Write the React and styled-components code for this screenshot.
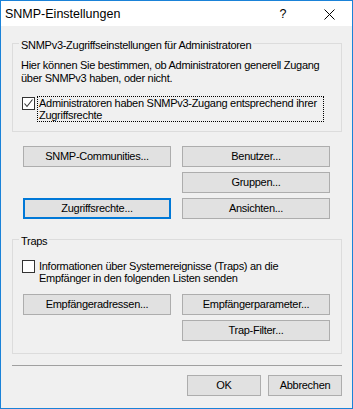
import React from "react";
import styled, { createGlobalStyle, css } from "styled-components";

const GlobalStyle = createGlobalStyle`
  html, body {
    margin: 0;
    padding: 0;
    background: #ffffff;
  }
  * {
    box-sizing: border-box;
  }
`;

const Window = styled.div`
  width: 353px;
  height: 409px;
  display: flex;
  flex-direction: column;
  border: 1px solid #1a82d8;
  background: #f0f0f0;
  font-family: "Liberation Sans", Arial, sans-serif;
  font-size: 11px;
  line-height: 13px;
  letter-spacing: -0.28px;
  color: #000;
`;

const TitleBar = styled.div`
  height: 25px;
  display: flex;
  align-items: center;
  background: #ffffff;
`;

const Title = styled.div`
  flex: 1;
  padding-left: 4px;
  font-size: 12.5px;
  line-height: 16px;
  letter-spacing: 0;
  padding-top: 1px;
`;

const TitleButton = styled.div`
  width: 46px;
  height: 25px;
  display: flex;
  align-items: center;
  justify-content: center;
  font-size: 12.5px;
  letter-spacing: 0;
  padding-top: 1px;
`;

const Body = styled.div`
  flex: 1;
  display: flex;
  flex-direction: column;
  padding: 9px 10px 0 11px;
`;

const Group = styled.fieldset`
  margin: 0;
  min-width: 0;
  border: 1px solid #dcdcdc;
  padding: 7px 8px ${(p) => p.$bottom}px 8px;
  ${(p) =>
    p.$top &&
    css`
      margin-top: ${p.$top}px;
    `}
`;

const Legend = styled.legend`
  padding: 4px 2px 0;
  margin-left: -2px;
  line-height: 13px;
`;

const Text = styled.div`
  margin: 0;
  white-space: nowrap;
`;

const CheckRow = styled.div`
  display: flex;
  align-items: flex-start;
  margin-top: ${(p) => p.$top}px;
`;

const Box = styled.div`
  width: 13px;
  height: 13px;
  flex: none;
  margin: 1px 2px 0 1px;
  border: 1px solid #333333;
  background: #ffffff;
  display: flex;
  align-items: center;
  justify-content: center;
`;

const CheckLabel = styled.div`
  width: 287px;
  line-height: 12px;
  padding: 0 1px;
  border: 1px dotted ${(p) => (p.$focus ? "#000000" : "transparent")};
`;

const ButtonGrid = styled.div`
  display: grid;
  grid-template-columns: 148px 148px;
  column-gap: 11px;
  row-gap: 5px;
  margin: ${(p) => p.$top}px 0 0 ${(p) => p.$left}px;
`;

const Button = styled.div`
  height: 21px;
  display: flex;
  align-items: center;
  justify-content: center;
  background: #e1e1e1;
  border: 1px solid #adadad;
  ${(p) =>
    p.$col &&
    css`
      grid-column: ${p.$col};
    `}
  ${(p) =>
    p.$default &&
    css`
      border: 2px solid #0078d7;
    `}
`;

const Separator = styled.div`
  height: 1px;
  margin-top: 11px;
  background: #a0a0a0;
`;

const Footer = styled.div`
  display: flex;
  justify-content: flex-end;
  gap: 7px;
  margin-top: 9px;
`;

const FooterButton = styled(Button)`
  width: 74px;
`;

function CheckBox({ checked, focus, top, children }) {
  return (
    <CheckRow $top={top}>
      <Box>
        {checked && (
          <svg width="11" height="11" viewBox="0 0 11 11">
            <polyline points="1.5,5.5 4,8.5 9.5,1.5" fill="none" stroke="#333" strokeWidth="1.1" />
          </svg>
        )}
      </Box>
      <CheckLabel $focus={focus}>{children}</CheckLabel>
    </CheckRow>
  );
}

export default function App() {
  return (
    <>
      <GlobalStyle />
      <Window>
        <TitleBar>
          <Title>SNMP-Einstellungen</Title>
          <TitleButton>?</TitleButton>
          <TitleButton>
            <svg width="11" height="11" viewBox="0 0 11 11">
              <path d="M0.5 0.5 L10.5 10.5 M10.5 0.5 L0.5 10.5" stroke="#000" strokeWidth="1" />
            </svg>
          </TitleButton>
        </TitleBar>
        <Body>
          <Group $bottom={9}>
            <Legend>SNMPv3-Zugriffseinstellungen für Administratoren</Legend>
            <Text>
              Hier können Sie bestimmen, ob Administratoren generell Zugang
              <br />
              über SNMPv3 haben, oder nicht.
            </Text>
            <CheckBox checked focus top={11}>
              Administratoren haben SNMPv3-Zugang entsprechend ihrer Zugriffsrechte
            </CheckBox>
          </Group>

          <ButtonGrid $top={14} $left={11}>
            <Button>SNMP-Communities...</Button>
            <Button>Benutzer...</Button>
            <Button $col={2}>Gruppen...</Button>
            <Button $default>Zugriffsrechte...</Button>
            <Button>Ansichten...</Button>
          </ButtonGrid>

          <Group $top={12} $bottom={12}>
            <Legend>Traps</Legend>
            <CheckBox top={4}>
              Informationen über Systemereignisse (Traps) an die Empfänger in den folgenden Listen senden
            </CheckBox>
            <ButtonGrid $top={9} $left={2}>
              <Button>Empfängeradressen...</Button>
              <Button>Empfängerparameter...</Button>
              <Button $col={2}>Trap-Filter...</Button>
            </ButtonGrid>
          </Group>

          <Separator />
          <Footer>
            <FooterButton>OK</FooterButton>
            <FooterButton>Abbrechen</FooterButton>
          </Footer>
        </Body>
      </Window>
    </>
  );
}
